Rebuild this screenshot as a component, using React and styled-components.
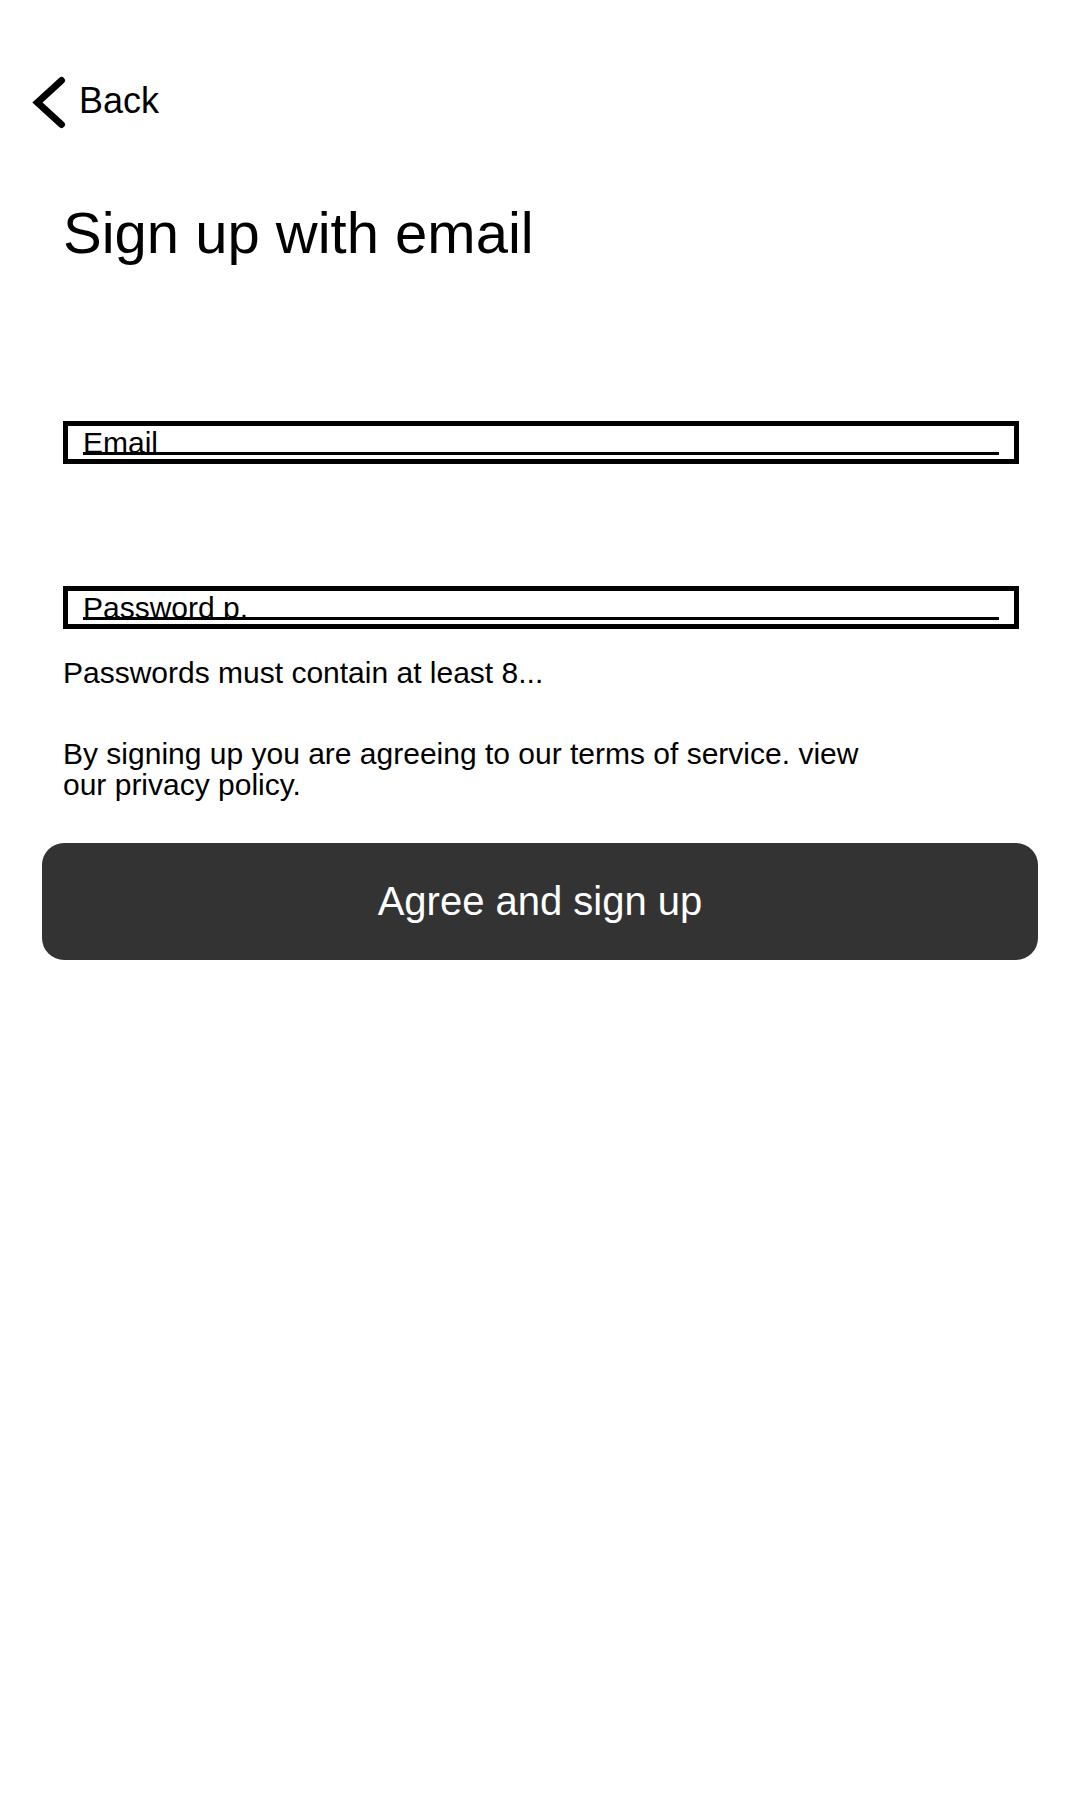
import React, { useState } from 'react'
import styled, { createGlobalStyle } from 'styled-components'

const GlobalStyle = createGlobalStyle`
    html, body {
        margin: 0;
        padding: 0;
        background: #fff;
    }
    body {
        font-family: "Liberation Sans", Arial, sans-serif;
        color: #000;
    }
    * {
        box-sizing: border-box;
    }
`

function App() {
    const [Email, setEmail] = useState('')
    const [Password, setPassword] = useState('')

    return (
        <Page>
            <GlobalStyle />
            <BackButton type='button'>
                <svg width='36' height='56' viewBox='0 0 36 56' fill='none'>
                    <path d='M31.5 6.5 L7.5 28.5 L31.5 50.5' stroke='#000' strokeWidth='7' strokeLinecap='round' strokeLinejoin='miter' />
                </svg>
                <span>Back</span>
            </BackButton>

            <Title>Sign up with email</Title>

            <Form onSubmit={(e) => e.preventDefault()}>
                <Field>
                    <Input type='email' placeholder='Email' value={Email} onChange={(e) => setEmail(e.target.value)} />
                </Field>
                <Field space={122}>
                    <Input type='password' placeholder='Password p.' value={Password} onChange={(e) => setPassword(e.target.value)} />
                </Field>
                <Hint>Passwords must contain at least 8...</Hint>
                <Terms>By signing up you are agreeing to our terms of service. view our privacy policy.</Terms>
            </Form>

            <SubmitButton type='button'>Agree and sign up</SubmitButton>
        </Page>
    )
}

const Page = styled.div`
    display: flex;
    flex-direction: column;
    width: 1080px;
    min-height: 1800px;
    padding-top: 74px;
    background: #fff;
`

const BackButton = styled.button`
    display: flex;
    align-items: center;
    gap: 13px;
    align-self: flex-start;
    margin-left: 30px;
    padding: 0;
    border: none;
    background: none;
    cursor: pointer;
    font-family: "Liberation Sans", Arial, sans-serif;
    font-size: 36px;
    color: #000;
    svg {
        display: block;
    }
    span {
        line-height: 40px;
        margin-top: -3px;
    }
`

const Title = styled.h1`
    margin: 70px 0 0 63px;
    font-size: 58px;
    font-weight: 400;
    line-height: 66px;
`

const Form = styled.form`
    display: flex;
    flex-direction: column;
    margin-top: 155px;
    padding: 0 61px 0 63px;
`

const Field = styled.label`
    display: block;
    margin-top: ${(props) => props.space || 0}px;
    height: 43px;
    padding: 0 15px 4px;
    border: 5px solid #000;
`

const Input = styled.input`
    display: block;
    width: 100%;
    height: 29px;
    padding: 7px 0 0;
    margin: 0;
    border: none;
    border-bottom: 3px solid #000;
    border-radius: 0;
    outline: none;
    background: transparent;
    font-family: "Liberation Sans", Arial, sans-serif;
    font-size: 30px;
    line-height: 30px;
    color: #000;
    &::placeholder {
        color: #000;
        opacity: 1;
    }
`

const Hint = styled.p`
    margin: 27px 0 0;
    font-size: 30px;
    line-height: 34px;
`

const Terms = styled.p`
    margin: 48px 0 0;
    max-width: 820px;
    font-size: 30px;
    line-height: 31px;
`

const SubmitButton = styled.button`
    margin: 43px 42px 0;
    height: 117px;
    border: none;
    border-radius: 22px;
    background: #333;
    color: #fff;
    font-family: "Liberation Sans", Arial, sans-serif;
    font-size: 40px;
    cursor: pointer;
`

export default App
